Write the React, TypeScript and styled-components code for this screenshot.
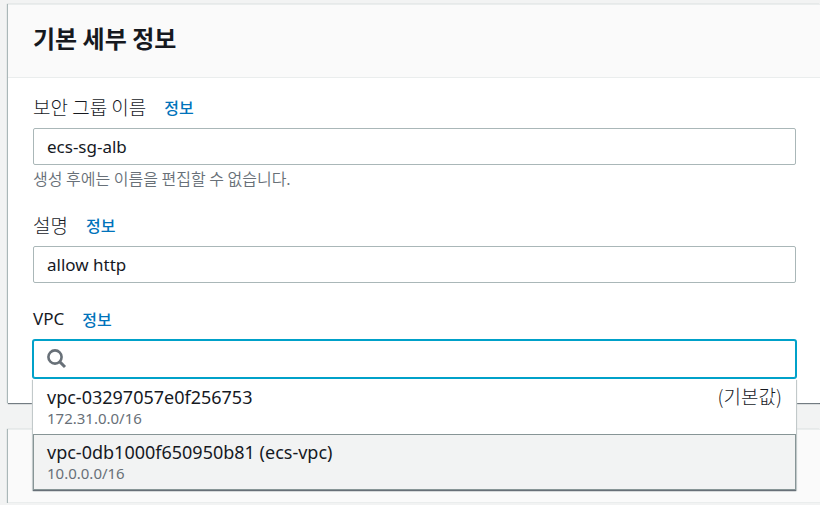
import React, { useState } from "react";
import styled, { createGlobalStyle, css } from "styled-components";

const GlobalStyle = createGlobalStyle`
  *, *::before, *::after { box-sizing: border-box; }
  html, body { margin: 0; }
  body {
    background: #f2f3f3;
    color: #16191f;
    font-family: "Noto Sans", "Noto Sans CJK KR", sans-serif;
    font-size: 17px;
    line-height: 22px;
    overflow: hidden;
  }
  button, input { font: inherit; color: inherit; }
`;

const Page = styled.main`
  display: flex;
  flex-direction: column;
  gap: 26px;
  padding: 4px 0 0 8px;
`;

const Panel = styled.section`
  background: #fff;
  border-top: 1px solid #eaeded;
  box-shadow: -1px 0 1px 0 #aab7b8, 0 1px 1px 0 #687078;
`;

const PanelHeader = styled.header`
  display: flex;
  align-items: center;
  min-height: 73px;
  padding: 0 25px;
  background: #fafafa;
  border-bottom: 1px solid #eaeded;
`;

const Title = styled.h2`
  margin: 0;
  padding-bottom: 6px;
  font-family: "Noto Sans CJK KR", sans-serif;
  font-size: 24px;
  line-height: 30px;
  font-weight: 700;
`;

const Form = styled.form`
  display: flex;
  flex-direction: column;
  gap: 25px;
  padding: 18px 24px 25px 25px;
`;

const Field = styled.div`
  position: relative;
`;

const LabelRow = styled.div`
  display: flex;
  align-items: center;
  gap: 18px;
  height: 22px;
  margin-bottom: 10px;
`;

const Label = styled.label<{ $korean?: boolean }>`
  ${(p) =>
    p.$korean &&
    css`
      font-family: "Noto Sans CJK KR", sans-serif;
      font-size: 19px;
      font-weight: 300;
    `}
`;

const InfoLink = styled.a`
  color: #0073bb;
  font-family: "Noto Sans CJK KR", sans-serif;
  font-size: 16px;
  font-weight: 500;
  text-decoration: none;
`;

const TextInput = styled.input`
  display: block;
  width: 100%;
  height: 37px;
  padding: 0 13px 1px;
  border: 1px solid #aab7b8;
  border-radius: 2px;
  background: #fff;
  outline: none;
`;

const Hint = styled.p`
  margin: 3px 0 0;
  color: #687078;
  font-family: "Noto Sans CJK KR", sans-serif;
  font-size: 16px;
  line-height: 21px;
  font-weight: 350;
`;

const SearchBox = styled.div`
  display: flex;
  align-items: center;
  gap: 8px;
  height: 38px;
  padding: 0 13px;
  border: 1px solid #00a1c9;
  border-radius: 2px;
  box-shadow: 0 0 0 1px #00a1c9;
  background: #fff;
`;

const SearchInput = styled.input`
  flex: 1;
  min-width: 0;
  height: 100%;
  padding: 0;
  border: 0;
  background: transparent;
  outline: none;
`;

const Options = styled.ul`
  position: absolute;
  top: calc(100% + 1px);
  left: 0;
  right: 0;
  z-index: 1;
  margin: 0;
  padding: 0;
  list-style: none;
  background: #fff;
  box-shadow: 0 1px 1px 0 #687078, -1px 1px 1px 0 #d5dbdb, 1px 1px 1px 0 #d5dbdb;
`;

const Option = styled.li<{ $active: boolean }>`
  display: flex;
  justify-content: space-between;
  height: 56px;
  padding: 6px 13px;
  border: 1px solid ${(p) => (p.$active ? "#879596" : "transparent")};
  background: ${(p) => (p.$active ? "#f2f3f3" : "#fff")};
  cursor: pointer;

  & + & {
    margin-top: -1px;
  }
`;

const OptionName = styled.div`
  font-size: 18px;
`;

const OptionDetail = styled.div`
  color: #687078;
  font-size: 15px;
  line-height: 20px;
`;

const OptionTag = styled.span`
  font-family: "Noto Sans CJK KR", sans-serif;
  font-size: 19px;
  line-height: 20px;
  font-weight: 300;
`;

const SearchIcon = () => (
  <svg width="20" height="20" viewBox="0 0 20 20" fill="none" stroke="#687078" aria-hidden="true">
    <circle cx="8" cy="8" r="6.6" strokeWidth="2.6" />
    <path d="M12.6 12.6 18 18" strokeWidth="3" />
  </svg>
);

const vpcs = [
  { id: "vpc-03297057e0f256753", cidr: "172.31.0.0/16", tag: "(기본값)" },
  { id: "vpc-0db1000f650950b81 (ecs-vpc)", cidr: "10.0.0.0/16" },
];

export default function App() {
  const [name, setName] = useState("ecs-sg-alb");
  const [description, setDescription] = useState("allow http");
  const [query, setQuery] = useState("");
  const [active, setActive] = useState(1);

  return (
    <>
      <GlobalStyle />
      <Page>
        <Panel>
          <PanelHeader>
            <Title>기본 세부 정보</Title>
          </PanelHeader>
          <Form>
            <Field>
              <LabelRow>
                <Label $korean htmlFor="name">보안 그룹 이름</Label>
                <InfoLink href="#name">정보</InfoLink>
              </LabelRow>
              <TextInput
                id="name"
                aria-describedby="name-hint"
                value={name}
                onChange={(e) => setName(e.target.value)}
              />
              <Hint id="name-hint">생성 후에는 이름을 편집할 수 없습니다.</Hint>
            </Field>
            <Field>
              <LabelRow>
                <Label $korean htmlFor="description">설명</Label>
                <InfoLink href="#description">정보</InfoLink>
              </LabelRow>
              <TextInput
                id="description"
                value={description}
                onChange={(e) => setDescription(e.target.value)}
              />
            </Field>
            <Field>
              <LabelRow>
                <Label htmlFor="vpc">VPC</Label>
                <InfoLink href="#vpc">정보</InfoLink>
              </LabelRow>
              <SearchBox>
                <SearchIcon />
                <SearchInput
                  id="vpc"
                  role="combobox"
                  aria-expanded="true"
                  aria-controls="vpc-options"
                  value={query}
                  onChange={(e) => setQuery(e.target.value)}
                />
              </SearchBox>
              <Options id="vpc-options" role="listbox">
                {vpcs.map((vpc, i) => (
                  <Option
                    key={vpc.id}
                    role="option"
                    aria-selected={i === active}
                    $active={i === active}
                    onMouseEnter={() => setActive(i)}
                  >
                    <div>
                      <OptionName>{vpc.id}</OptionName>
                      <OptionDetail>{vpc.cidr}</OptionDetail>
                    </div>
                    {vpc.tag && <OptionTag>{vpc.tag}</OptionTag>}
                  </Option>
                ))}
              </Options>
            </Field>
          </Form>
        </Panel>
        <Panel>
          <PanelHeader />
        </Panel>
      </Page>
    </>
  );
}
